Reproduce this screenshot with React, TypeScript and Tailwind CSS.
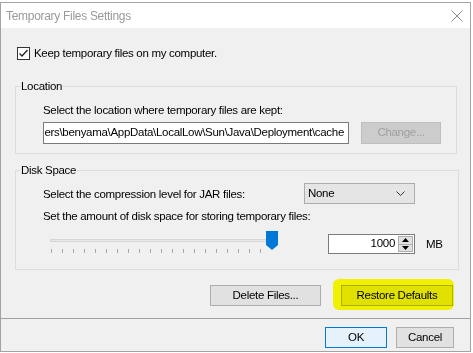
import React from "react";

const font = { fontFamily: '"Liberation Sans", Arial, sans-serif' };

function Button({ children, className = "", disabled = false }: { children: React.ReactNode; className?: string; disabled?: boolean }) {
  return (
    <div
      className={
        "flex h-[21px] items-center justify-center border " +
        (disabled ? "border-[#bfbfbf] bg-[#cccccc] text-[#a0a0a0] " : "border-[#adadad] bg-[#e1e1e1] text-black ") +
        className
      }
    >
      {children}
    </div>
  );
}

function Group({ title, children, className = "" }: { title: string; children: React.ReactNode; className?: string }) {
  return (
    <fieldset className={"mx-[14px] border border-[#dcdcdc] " + className}>
      <legend className="ml-[-23px] h-4 px-[1px] leading-4 text-black">{title}</legend>
      {children}
    </fieldset>
  );
}

export default function App() {
  const ticks = Array.from({ length: 20 }, (_, i) => i);
  return (
    <div className="h-[353px] w-[473px] overflow-hidden bg-white" style={font}>
      <div className="mt-[2px] flex h-[350px] w-[471px] flex-col border border-[#a3a3a3] bg-[#f0f0f0] text-[11.5px] tracking-[-0.3px] text-black">
        {/* title bar */}
        <div className="flex h-[25px] items-center justify-between bg-white pl-[5px] pr-[8px]">
          <span className="text-[12px] text-[#9a9a9a]">Temporary Files Settings</span>
          <svg width="12" height="12" viewBox="0 0 12 12" className="mr-[-1px]">
            <path d="M0.5 0.5 L11.5 11.5 M11.5 0.5 L0.5 11.5" stroke="#8a8a8a" strokeWidth="1" />
          </svg>
        </div>

        {/* checkbox */}
        <div className="mt-[17px] flex items-center pl-[16px]">
          <div className="flex h-[13px] w-[13px] items-center justify-center border border-[#333333] bg-white">
            <svg width="11" height="11" viewBox="0 0 11 11">
              <path d="M1.5 5.5 L4 8 L9.5 2" fill="none" stroke="#222" strokeWidth="1.3" />
            </svg>
          </div>
          <span className="ml-[4px] leading-4">Keep temporary files on my computer.</span>
        </div>

        <Group title="Location" className="mt-[17px] pb-[9px] pl-[27px] pr-[15px] pt-[8px]">
          <div className="leading-4">Select the location where temporary files are kept:</div>
          <div className="mt-[4px] flex items-center">
            <div className="flex h-[22px] w-[306px] items-center justify-end overflow-hidden whitespace-nowrap border border-[#7a7a7a] bg-white pr-[4px]">
              ers\benyama\AppData\LocalLow\Sun\Java\Deployment\cache
            </div>
            <Button disabled className="ml-[12px] h-[22px] w-[80px]">
              Change...
            </Button>
          </div>
        </Group>

        <Group title="Disk Space" className="mt-[8px] pb-[15px] pl-[27px] pr-[15px] pt-[5px]">
          <div className="flex h-[21px] items-center">
            <span className="w-[261px] leading-4">Select the compression level for JAR files:</span>
            <div className="flex h-[21px] w-[111px] items-center justify-between border border-[#adadad] bg-[#e5e5e5] pl-[3px] pr-[9px]">
              <span>None</span>
              <svg width="9" height="5" viewBox="0 0 9 5">
                <path d="M0.5 0.5 L4.5 4.5 L8.5 0.5" fill="none" stroke="#333" strokeWidth="1" />
              </svg>
            </div>
          </div>
          <div className="mt-[4px] leading-4">Set the amount of disk space for storing temporary files:</div>
          <div className="mt-[6px] flex h-[24px] items-start">
            {/* slider */}
            <div className="relative ml-[7px] h-[24px] w-[228px]">
              <div className="absolute left-0 right-[6px] top-[9px] h-[3px] border border-[#d6d6d6] bg-[#e7e7e7]" />
              <div className="absolute left-[1px] top-[19px] flex gap-[10px]">
                {ticks.map((t) => (
                  <div key={t} className="h-[4px] w-[1px] bg-[#a8a8a8]" />
                ))}
              </div>
              <svg width="12" height="19" viewBox="0 0 12 19" className="absolute right-0 top-[1px]">
                <path d="M0 0 H12 V14 L6 19 L0 14 Z" fill="#0078d7" />
              </svg>
            </div>
            {/* spinner */}
            <div className="ml-[50px] mt-[4px] flex h-[20px] w-[87px] border border-[#7a7a7a] bg-white">
              <div className="flex flex-1 items-center justify-end pr-[3px]">1000</div>
              <div className="my-[1px] mr-[1px] flex w-[15px] flex-col border border-[#adadad] bg-[#e1e1e1]">
                <div className="flex flex-1 items-center justify-center border-b border-[#adadad]">
                  <svg width="7" height="4" viewBox="0 0 7 4">
                    <path d="M0 4 L3.5 0 L7 4 Z" fill="#000" />
                  </svg>
                </div>
                <div className="flex flex-1 items-center justify-center">
                  <svg width="7" height="4" viewBox="0 0 7 4">
                    <path d="M0 0 L3.5 4 L7 0 Z" fill="#000" />
                  </svg>
                </div>
              </div>
            </div>
            <span className="ml-[11px] mt-[6px] leading-4">MB</span>
          </div>
        </Group>

        {/* action buttons */}
        <div className="mt-[15px] flex justify-end gap-[20px] pr-[17px]">
          <Button className="w-[111px]">Delete Files...</Button>
          <div className="relative">
            <Button className="w-[112px]">Restore Defaults</Button>
            <div className="pointer-events-none absolute bottom-[-4px] left-[-8px] right-[-1px] top-[-6px] rounded-[6px] bg-[#ffff00] mix-blend-multiply" />
          </div>
        </div>

        <div className="mt-[12px] h-px bg-[#a0a0a0]" />

        <div className="mt-[8px] flex justify-end gap-[9px] pr-[16px]">
          <Button className="w-[62px] !border-[#0078d7] !bg-[#e5f1fb]">OK</Button>
          <Button className="w-[58px]">Cancel</Button>
        </div>
      </div>
    </div>
  );
}
